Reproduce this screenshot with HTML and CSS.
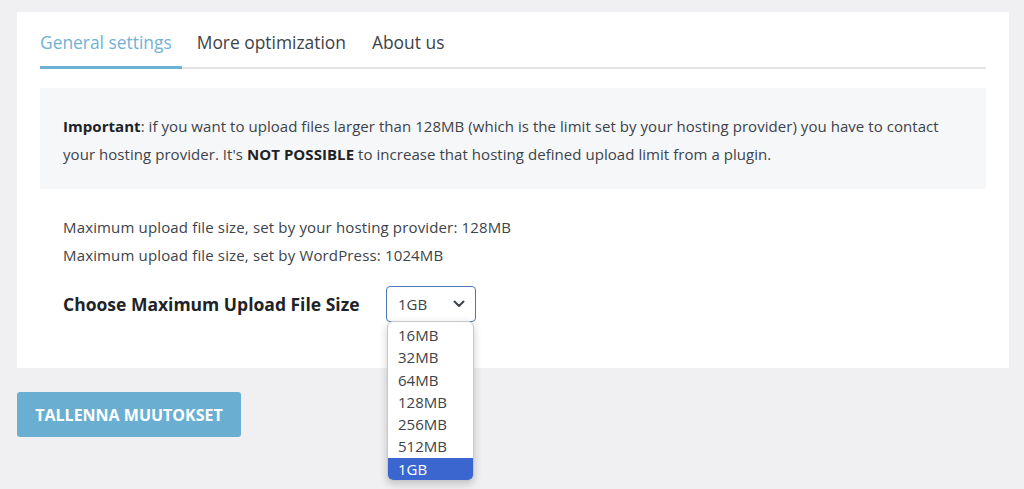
FILE: index.html
```html
<!DOCTYPE html>
<html>
<head>
<meta charset="utf-8">
<link rel="stylesheet" href="styles.css">
</head>
<body>
<div class="wrap">
  <div class="card">
    <nav class="tabs">
      <span class="tab active">General settings</span>
      <span class="tab">More optimization</span>
      <span class="tab">About us</span>
    </nav>
    <div class="notice">
      <p><strong>Important</strong>: if you want to upload files larger than 128MB (which is the limit set by your hosting provider) you have to contact your hosting provider. It's <strong>NOT POSSIBLE</strong> to increase that hosting defined upload limit from a plugin.</p>
    </div>
    <div class="info">
      <p>Maximum upload file size, set by your hosting provider: 128MB</p>
      <p>Maximum upload file size, set by WordPress: 1024MB</p>
    </div>
    <div class="choose">
      <label class="choose-label">Choose Maximum Upload File Size</label>
      <div class="select-wrap">
        <div class="select">
          <span>1GB</span>
          <svg class="chev" width="12" height="8" viewBox="0 0 12 8"><path d="M1.5 1.5 L6 6 L10.5 1.5" fill="none" stroke="#3c434a" stroke-width="2" stroke-linecap="round" stroke-linejoin="round"/></svg>
        </div>
        <ul class="dropdown">
          <li>16MB</li>
          <li>32MB</li>
          <li>64MB</li>
          <li>128MB</li>
          <li>256MB</li>
          <li>512MB</li>
          <li class="selected">1GB</li>
        </ul>
      </div>
    </div>
  </div>
  <button class="save">TALLENNA MUUTOKSET</button>
</div>
</body>
</html>
```

FILE: styles.css
```css
* { box-sizing: border-box; }
html, body { min-height: 100%; height: 100%; }
body {
  margin: 0;
  background: #f0f0f2;
  font-family: "Open Sans", "Noto Sans", sans-serif;
  color: #3c434a;
}
.wrap {
  padding: 12px 15px 0 17px;
}
.card {
  background: #fff;
  padding: 16px 23px 46px 23px;
}
.tabs {
  display: flex;
  border-bottom: 2px solid #e4e4e6;
  height: 41px;
}
.tab {
  font-size: 17.4px;
  line-height: 28px;
  margin-right: 26px;
  color: #3c434a;
  height: 41px;
}
.tab.active {
  color: #72b2d6;
  border-bottom: 3px solid #6cb3d6;
  padding-right: 10px;
  margin-right: 15px;
}
.notice {
  margin-top: 19px;
  background: #f6f7f8;
  padding: 24px 23px 21px 23px;
}
.notice p {
  margin: 0;
  font-size: 15px;
  line-height: 28px;
  letter-spacing: 0.05px;
}
.notice strong { font-weight: 700; color: #1d2327; }
.info {
  padding: 24px 23px 0 23px;
}
.info p {
  margin: 0;
  font-size: 15px;
  line-height: 28px;
  letter-spacing: 0.15px;
}
.choose {
  display: flex;
  align-items: center;
  padding: 17px 23px 0 23px;
}
.choose-label {
  font-size: 17.5px;
  font-weight: 700;
  color: #1d2327;
  width: 323px;
}
.select-wrap {
  position: relative;
}
.select {
  width: 90px;
  height: 36px;
  border: 1px solid #4f78b8;
  border-radius: 4px;
  display: flex;
  align-items: center;
  justify-content: space-between;
  padding: 0 10px 0 11px;
  font-size: 15px;
  background: #fff;
}
.chev { display: block; }
.dropdown {
  position: absolute;
  left: 1px;
  top: 35px;
  width: 87px;
  margin: 0;
  padding: 2px 0 0 0;
  list-style: none;
  background: #fff;
  border: 1px solid #c8c8cc;
  border-radius: 6px;
  box-shadow: 0 3px 8px rgba(0,0,0,0.2);
  overflow: hidden;
  z-index: 5;
}
.dropdown li {
  font-size: 15px;
  line-height: 22.3px;
  padding-left: 10px;
  color: #3c434a;
}
.dropdown li.selected {
  background: #3b66cf;
  color: #fff;
}
.save {
  margin-top: 24px;
  width: 224px;
  height: 45px;
  border: none;
  border-radius: 3px;
  background: #6aafd1;
  color: #fff;
  font-family: "Open Sans", "Noto Sans", sans-serif;
  font-weight: 700;
  font-size: 16px;
}
```
